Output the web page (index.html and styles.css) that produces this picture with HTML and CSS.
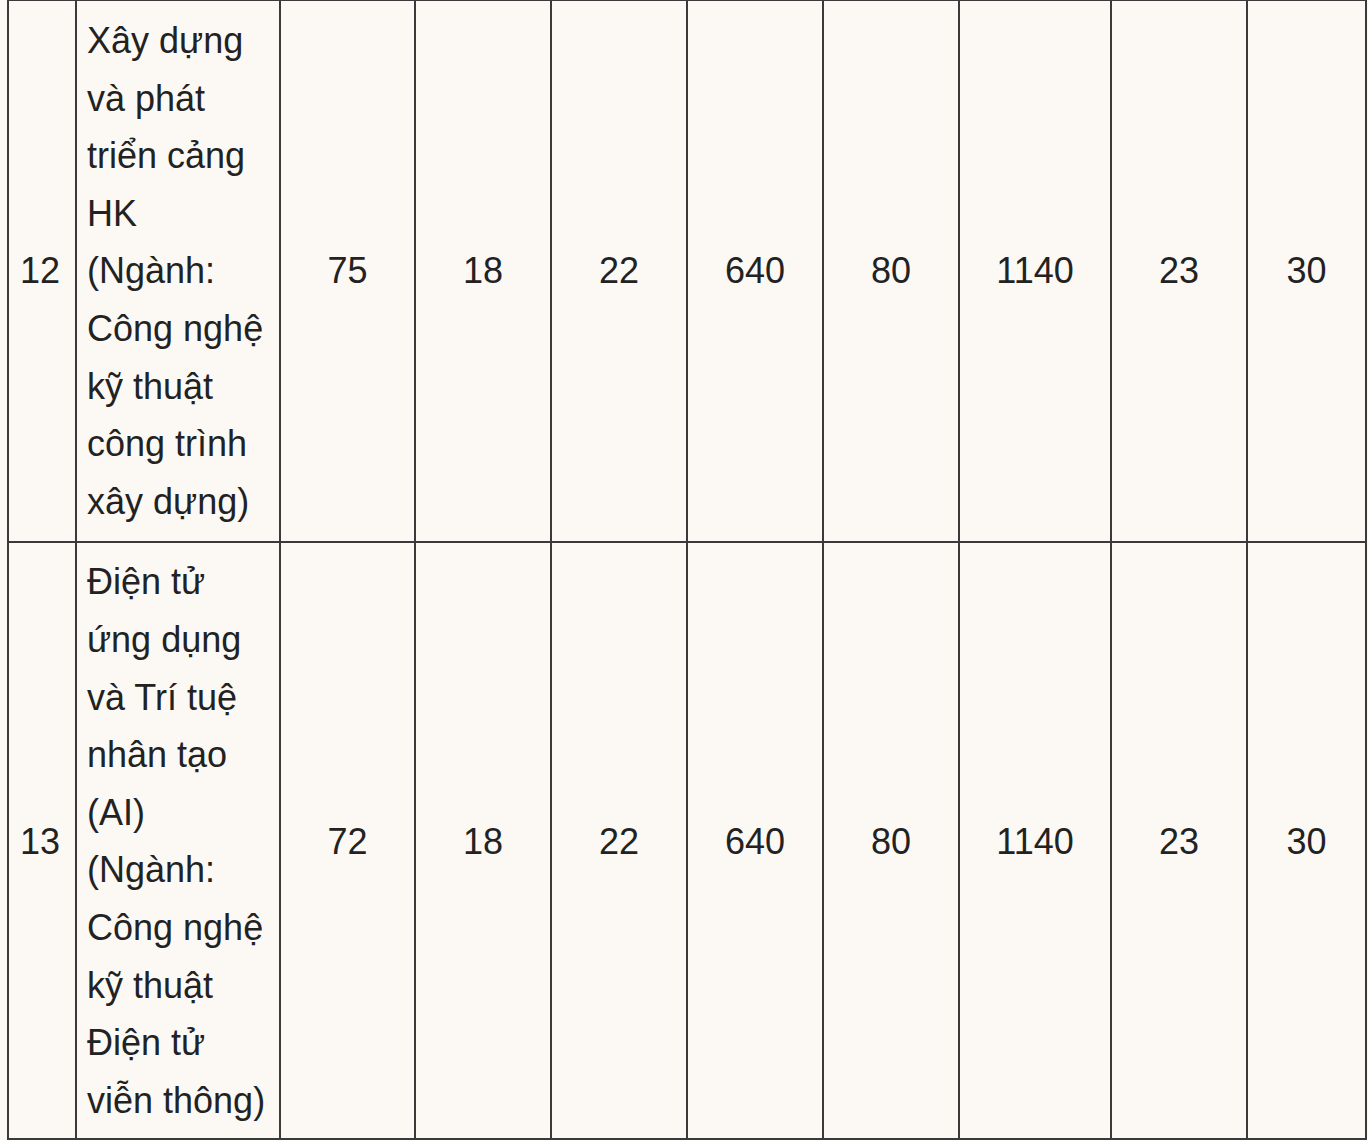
FILE: index.html
```html
<!DOCTYPE html>
<html lang="vi">
<head>
<meta charset="utf-8">
<title>Bảng</title>
<link rel="stylesheet" href="styles.css">
</head>
<body>
<table class="grid">
  <colgroup>
    <col class="c-stt">
    <col class="c-name">
    <col class="c-a">
    <col class="c-n">
    <col class="c-n">
    <col class="c-n">
    <col class="c-n">
    <col class="c-w">
    <col class="c-n">
    <col class="c-last">
  </colgroup>
  <tbody>
    <tr class="r1">
      <td class="stt">12</td>
      <td class="name">Xây dựng<br>và phát<br>triển cảng<br>HK<br>(Ngành:<br>Công nghệ<br>kỹ thuật<br>công trình<br>xây dựng)</td>
      <td>75</td>
      <td>18</td>
      <td>22</td>
      <td>640</td>
      <td>80</td>
      <td>1140</td>
      <td>23</td>
      <td>30</td>
    </tr>
    <tr class="r2">
      <td class="stt">13</td>
      <td class="name">Điện tử<br>ứng dụng<br>và Trí tuệ<br>nhân tạo<br>(AI)<br>(Ngành:<br>Công nghệ<br>kỹ thuật<br>Điện tử<br>viễn thông)</td>
      <td>72</td>
      <td>18</td>
      <td>22</td>
      <td>640</td>
      <td>80</td>
      <td>1140</td>
      <td>23</td>
      <td>30</td>
    </tr>
  </tbody>
</table>
</body>
</html>
```

FILE: styles.css
```css
html, body {
  margin: 0;
  padding: 0;
  background: #fcf9f5;
}
body {
  padding-left: 7px;
  font-family: "Liberation Sans", Arial, sans-serif;
  color: #222;
}
.grid {
  border-collapse: collapse;
  table-layout: fixed;
  width: 1359px;
  margin-top: -1px;
  font-size: 36px;
  line-height: 57.6px;
}
.c-stt { width: 68px; }
.c-name { width: 204px; }
.c-a { width: 135px; }
.c-n { width: 136px; }
.c-w { width: 152px; }
.c-last { width: 119px; }
.grid td {
  border: 2px solid #3a3a3a;
  padding: 10px 10px;
  text-align: center;
  vertical-align: middle;
  white-space: nowrap;
}
.r1 td {
  padding-top: 11px;
  padding-bottom: 11px;
}
.r2 td {
  padding-top: 10px;
  padding-bottom: 9px;
}
.grid td.stt {
  text-align: left;
  padding-left: 11px;
}
.grid td.name {
  text-align: left;
  padding-left: 10px;
}
```
